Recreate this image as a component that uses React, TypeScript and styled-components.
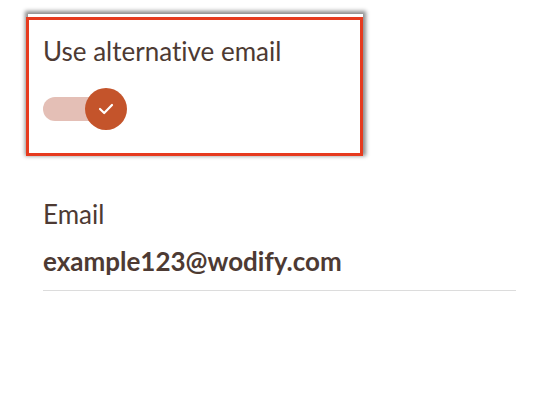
import React from "react";
import styled, { createGlobalStyle } from "styled-components";

const Global = createGlobalStyle`
  html, body { margin: 0; padding: 0; background: #ffffff; }
  body {
    font-family: "Lato", "Open Sans", sans-serif;
    color: #4d3a33;
    font-variant-ligatures: none;
    font-feature-settings: "liga" 0;
  }
`;

const Page = styled.div`
  width: 558px;
  height: 408px;
  box-sizing: border-box;
  padding: 14px 42px 0 28px;
  display: flex;
  flex-direction: column;
`;

const Card = styled.div`
  position: relative;
  width: 335px;
  height: 139px;
  box-sizing: border-box;
  padding: 21px 15px 0 15px;
  background: #fff;
  box-shadow: 0 0 4px 3px rgba(0, 0, 0, 0.45);
  display: flex;
  flex-direction: column;
  gap: 21px;

  &::after {
    content: "";
    position: absolute;
    left: -2px;
    top: 3px;
    width: 337px;
    height: 139px;
    box-sizing: border-box;
    border: 3px solid #e63a1e;
    pointer-events: none;
  }
`;

const Label = styled.div`
  font-size: 26px;
  line-height: 32px;
  color: #4d3a33;
`;

const Switch = styled.div`
  position: relative;
  width: 84px;
  height: 42px;
  display: flex;
  align-items: center;
`;

const Track = styled.div`
  width: 60px;
  height: 24px;
  border-radius: 12px;
  background: #e4bfb6;
`;

const Thumb = styled.div`
  position: absolute;
  left: 42px;
  top: 0;
  width: 42px;
  height: 42px;
  border-radius: 50%;
  background: #c4542b;
  display: flex;
  align-items: center;
  justify-content: center;
`;

const Field = styled.div`
  margin: 45px 0 0 15px;
  display: flex;
  flex-direction: column;
  border-bottom: 1px solid #dcdcdc;
  padding-bottom: 13px;
`;

const FieldLabel = styled.div`
  font-size: 26px;
  line-height: 32px;
  color: #4d3a33;
`;

const FieldValue = styled.div`
  margin-top: 15px;
  font-size: 26px;
  line-height: 32px;
  font-weight: 700;
  color: #4d3a33;
`;

export default function App() {
  return (
    <>
      <Global />
      <Page>
        <Card>
          <Label>Use alternative email</Label>
          <Switch>
            <Track />
            <Thumb>
              <svg width="16" height="12" viewBox="0 0 16 12" fill="none">
                <path d="M2 6 L6.2 10 L14 2" stroke="#fff" strokeWidth="2.2" strokeLinecap="round" strokeLinejoin="round" />
              </svg>
            </Thumb>
          </Switch>
        </Card>
        <Field>
          <FieldLabel>Email</FieldLabel>
          <FieldValue>example123@wodify.com</FieldValue>
        </Field>
      </Page>
    </>
  );
}
